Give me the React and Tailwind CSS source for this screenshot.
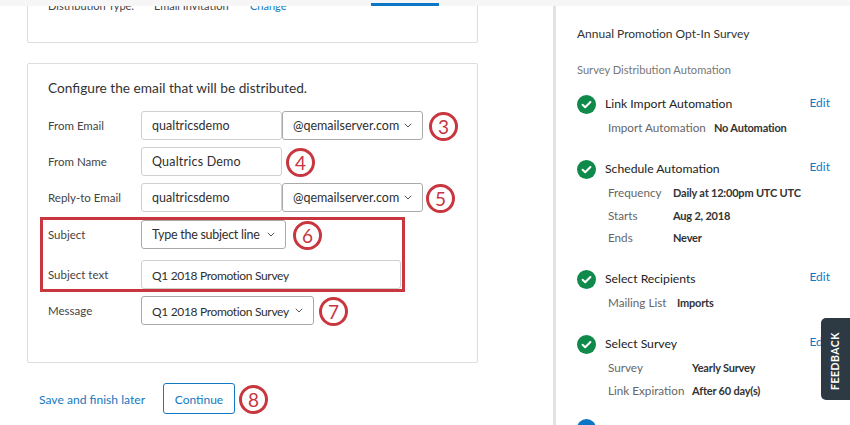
import React from "react";

const font = { fontFamily: "Lato, sans-serif" };

function Chevron() {
  return (
    <svg width="8" height="5" viewBox="0 0 8 5" fill="none" className="shrink-0">
      <path d="M0.8 0.8 L4 4 L7.2 0.8" stroke="#555" strokeWidth="1" />
    </svg>
  );
}

function Num({ n, className = "" }) {
  return (
    <div className={"flex h-[29px] w-[29px] shrink-0 translate-y-[1px] items-center justify-center rounded-full border-[3px] border-[#c8363f] bg-white text-[19px] leading-none text-[#c8363f] " + className}>
      {n}
    </div>
  );
}

function Input({ children, className = "" }) {
  return (
    <div className={"flex h-[29px] items-center whitespace-nowrap rounded-[3px] border border-[#cfcfcf] bg-white pl-[10px] pt-[2px] text-[#2f2f2f] " + className}>
      {children}
    </div>
  );
}

function Select({ children, className = "" }) {
  return (
    <div className={"flex h-[29px] items-center justify-between whitespace-nowrap rounded-[3px] border border-[#aaaaaa] bg-white pl-[10px] pr-[10px] text-[#2f2f2f] " + className}>
      <span className="pt-[2px]">{children}</span>
      <Chevron />
    </div>
  );
}

function Row({ label, children, className = "" }) {
  return (
    <div className={"flex items-center " + className}>
      <div className="w-[93px] shrink-0 text-[11.5px] leading-none text-[#444]">{label}</div>
      {children}
    </div>
  );
}

function Check() {
  return (
    <svg width="19" height="19" viewBox="0 0 19 19" className="shrink-0">
      <circle cx="9.5" cy="9.5" r="9.5" fill="#0f8a4b" />
      <path d="M5.6 9.8 L8.2 12.3 L13.4 7" fill="none" stroke="#fff" strokeWidth="2" strokeLinecap="round" strokeLinejoin="round" />
    </svg>
  );
}

function Step({ title, className = "", children }) {
  return (
    <div className={className}>
      <div className="flex items-center pr-[20px]">
        <Check />
        <div className="ml-[9px] flex-1 text-[12.2px] leading-none text-[#222]">{title}</div>
        <div className="-mt-[4px] text-[12px] leading-none text-[#1478c0]">Edit</div>
      </div>
      <div className="ml-[31px]">{children}</div>
    </div>
  );
}

function Detail({ label, value, w, className = "" }) {
  return (
    <div className={"flex leading-none " + className}>
      <div className="shrink-0 text-[11.7px] text-[#666]" style={{ width: w }}>{label}</div>
      <div className="text-[11px] font-bold tracking-[-0.2px] text-[#333]">{value}</div>
    </div>
  );
}

export default function App() {
  return (
    <div className="relative flex h-[425px] w-[850px] flex-col overflow-hidden bg-white" style={font}>
      <div className="relative z-10 h-[6px] shrink-0 bg-[#f6f6f6]">
        <div className="absolute left-[371px] top-[3px] h-[3px] w-[68px] bg-[#0b76c6]" />
      </div>
      <div className="flex min-h-0 flex-1">
        <div className="w-[553px] shrink-0 overflow-hidden pl-[27px]">
          <div className="-mt-[10px] h-[47px] w-[451px] rounded-[2px] border border-[#dddddd]">
            <div className="flex pl-[20px] pt-[2px] text-[11px] leading-[13px] text-[#444]">
              <span className="w-[106px]">Distribution Type:</span>
              <span className="w-[96px]">Email Invitation</span>
              <span className="text-[#1478c0]">Change</span>
            </div>
          </div>
          <div className="relative mt-[20px] h-[300px] w-[451px] rounded-[2px] border border-[#dddddd] pl-[20px] pt-[15px]">
            <div className="text-[13.7px] leading-[17px] text-[#333]">Configure the email that will be distributed.</div>
            <Row label="From Email" className="mt-[15px]">
              <Input className="w-[141px] text-[12.5px]">qualtricsdemo</Input>
              <Select className="w-[141px] text-[12.5px]">@qemailserver.com</Select>
              <Num n="3" className="ml-[6px]" />
            </Row>
            <Row label="From Name" className="mt-[7px]">
              <Input className="w-[141px] text-[12.5px] tracking-[0.2px]">Qualtrics Demo</Input>
              <Num n="4" className="ml-[4px]" />
            </Row>
            <Row label="Reply-to Email" className="mt-[7px]">
              <Input className="w-[141px] text-[12.5px]">qualtricsdemo</Input>
              <Select className="w-[141px] text-[12.5px]">@qemailserver.com</Select>
              <Num n="5" className="ml-[3px]" />
            </Row>
            <Row label="Subject" className="mt-[8px]">
              <Select className="w-[145px] text-[12.5px] tracking-[-0.26px]">Type the subject line</Select>
              <Num n="6" className="ml-[7px]" />
            </Row>
            <Row label="Subject text" className="mt-[11px]">
              <Input className="w-[260px] text-[12px] tracking-[-0.33px]">Q1 2018 Promotion Survey</Input>
            </Row>
            <Row label="Message" className="mt-[7px]">
              <Select className="w-[173px] text-[12px] tracking-[-0.33px]">Q1 2018 Promotion Survey</Select>
              <Num n="7" className="ml-[5px]" />
            </Row>
            <div className="absolute left-[12px] top-[153px] h-[75px] w-[365px] border-[3px] border-[#c8363f]" />
          </div>
          <div className="mt-[20px] flex items-center pl-[12px]">
            <span className="w-[124px] pt-[3px] text-[12.1px] text-[#1478c0]">Save and finish later</span>
            <div className="flex h-[31px] w-[72px] items-center justify-center rounded-[3px] border border-[#1478c0] pt-[2px] text-[12px] text-[#1478c0]">Continue</div>
            <Num n="8" className="ml-[4px]" />
          </div>
        </div>
        <div className="min-w-0 flex-1 border-l-[3px] border-[#e2e2e2] pl-[21px]">
          <div className="pt-[22px] text-[12px] leading-none text-[#333]">Annual Promotion Opt-In Survey</div>
          <div className="mt-[24px] text-[11.1px] leading-none text-[#777]">Survey Distribution Automation</div>
          <Step title="Link Import Automation" className="mt-[20px]">
            <Detail label="Import Automation" value="No Automation" w={106} className="mt-[8px]" />
          </Step>
          <Step title="Schedule Automation" className="mt-[26px]">
            <Detail label="Frequency" value="Daily at 12:00pm UTC UTC" w={65} className="mt-[8px]" />
            <Detail label="Starts" value="Aug 2, 2018" w={65} className="mt-[11px]" />
            <Detail label="Ends" value="Never" w={65} className="mt-[11px]" />
          </Step>
          <Step title="Select Recipients" className="mt-[26px]">
            <Detail label="Mailing List" value="Imports" w={69} className="mt-[8px]" />
          </Step>
          <Step title="Select Survey" className="mt-[26px]">
            <Detail label="Survey" value="Yearly Survey" w={84} className="mt-[8px]" />
            <Detail label="Link Expiration" value="After 60 day(s)" w={84} className="mt-[12px]" />
          </Step>
          <div className="mt-[22px] h-[19px] w-[19px] rounded-full bg-[#0b76c6]" />
        </div>
      </div>
      <div className="absolute right-0 top-[318px] flex h-[82px] w-[29px] items-center justify-center rounded-l-[5px] bg-[#2e3a43]">
        <span className="translate-y-[2px] rotate-180 text-[10.5px] font-bold tracking-[0.5px] text-white [writing-mode:vertical-rl]">FEEDBACK</span>
      </div>
    </div>
  );
}
